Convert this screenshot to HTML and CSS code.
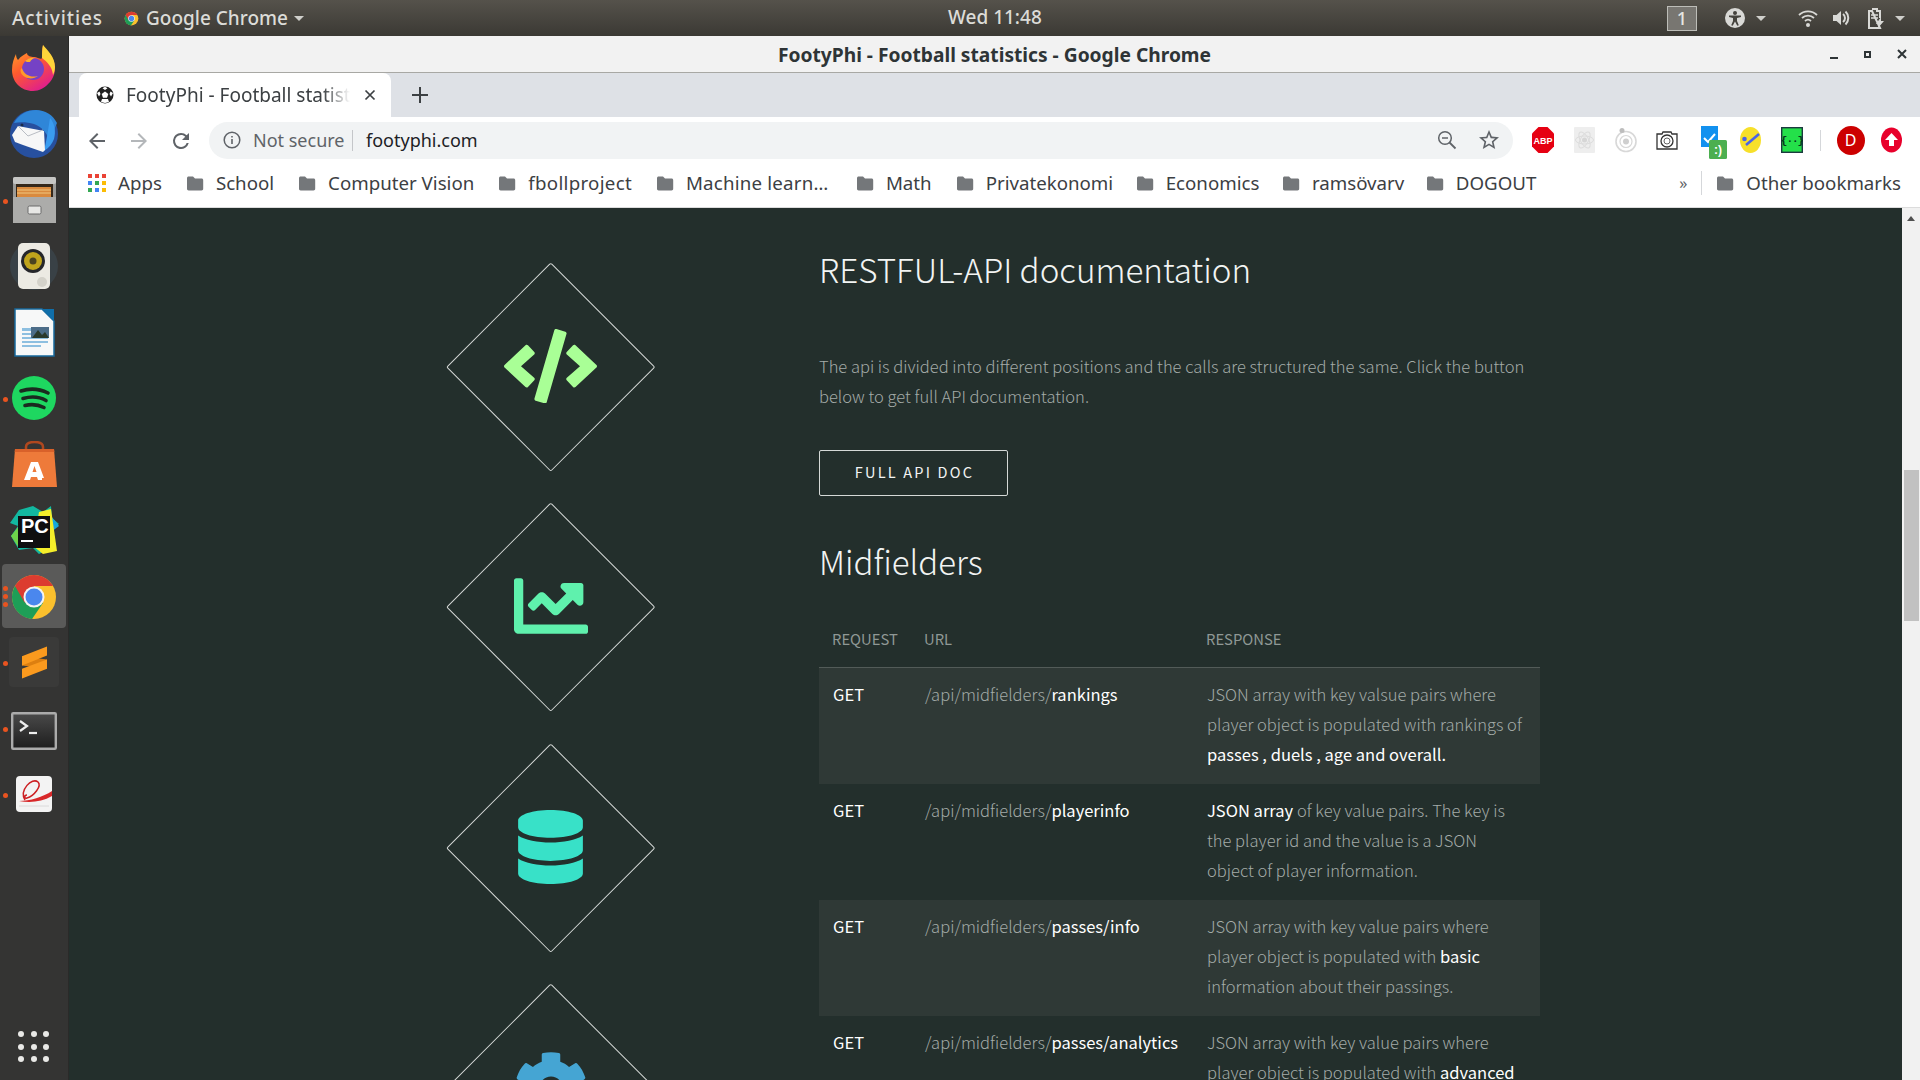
FILE: index.html
```html
<!DOCTYPE html>
<html lang="en">
<head>
<meta charset="utf-8">
<title>FootyPhi - Football statistics</title>
<link rel="stylesheet" href="styles.css">
</head>
<body>
<svg class="defs" width="0" height="0" aria-hidden="true">
  <symbol id="folder" viewBox="0 0 18 18"><path d="M1 4.2C1 3.2 1.7 2.5 2.7 2.5H7l2 2h6.5c1 0 1.7.7 1.7 1.7v8.600c0 1-.7 1.700-1.700 1.700H2.700c-1 0-1.700-.7-1.700-1.700z" fill="#74777a"/></symbol>
  <symbol id="chrome" viewBox="0 0 48 48">
    <circle cx="24" cy="24" r="22" fill="#fbc02d"/>
    <path d="M24 24 5 13A22 22 0 0 0 22 46L33 30Z" fill="#1e9e57"/>
    <path d="M24 13H43A22 22 0 0 0 5 13L14.500 29.500 24 24Z" fill="#dc3c30"/>
    <circle cx="24" cy="24" r="10.500" fill="#f4f4f4"/>
    <circle cx="24" cy="24" r="8.500" fill="#4a87ee"/>
  </symbol>
</svg>

<header class="topbar">
  <div class="tb-left">
    <span class="tb-activities">Activities</span>
    <svg class="tb-chrome" width="15" height="15"><use href="#chrome"/></svg>
    <span class="tb-app">Google Chrome</span>
    <span class="caret"></span>
  </div>
  <span class="tb-clock">Wed 11:48</span>
  <span class="tb-right">
    <span class="tb-ws">1</span>
    <svg class="tb-a11y" width="20" height="20" viewBox="0 0 20 20"><circle cx="10" cy="10" r="10" fill="#d9d9d6"/><circle cx="10" cy="5" r="2" fill="#45433d"/><path d="M4 7.500h12v1.600l-4 .8v3l1.800 4.400-1.500.5L10 13.500 7.700 17.800l-1.500-.5L8 13V9.900l-4-.8z" fill="#45433d"/></svg>
    <span class="caret caret-a11y"></span>
    <svg class="tb-wifi" width="20" height="20" viewBox="0 0 20 20"><path d="M1 7a13 13 0 0 1 18 0M4 10a9 9 0 0 1 12 0M7 13a4.500 4.500 0 0 1 6 0" fill="none" stroke="#d9d9d6" stroke-width="1.800"/><circle cx="10" cy="17" r="2" fill="#d9d9d6"/></svg>
    <svg class="tb-vol" width="20" height="20" viewBox="0 0 20 20"><path d="M1 7h3.500L9 3v14l-4.500-4H1z" fill="#d9d9d6"/><path d="M11 6a5 5 0 0 1 0 8M13.500 3.500a9 9 0 0 1 0 13" fill="none" stroke="#d9d9d6" stroke-width="2"/></svg>
    <svg class="tb-bat" width="20" height="22" viewBox="0 0 20 22"><path d="M6 2h5v2h3v7M14 21H3V4h3z" fill="none" stroke="#d9d9d6" stroke-width="2"/><path d="M5 8h7M5 11h7" stroke="#d9d9d6" stroke-width="1.500"/><path d="M15 10l-5 7h3l-1 4 6-7h-3z" fill="#d9d9d6"/></svg>
    <span class="caret caret-bat"></span>
  </span>
</header>

<div class="desktop">
  <nav class="dock">
    <div class="dock-item">
      <svg width="46" height="46" viewBox="0 0 46 46"><defs><linearGradient id="ff" x1="0" y1="0" x2="0.600" y2="1"><stop offset="0" stop-color="#ffb02a"/><stop offset=".5" stop-color="#ff5a2e"/><stop offset="1" stop-color="#e0208a"/></linearGradient></defs><path d="M32 0c1 4 9 9 11 17 2 7 1 14-4 20-5 6-11 9-17 9C10 46 1 37 1 25 1 18 3 13 5 9c0 3 1 5 2 6 3-4 7-6 9-7 0 3 4 4 7 4 4 0 8 4 8 0 0-4 0-8 1-12z" fill="url(#ff)"/><path d="M32 0c5 6 12 12 12 22 0 3-1 6-2 8-1-9-6-13-11-17 0-4 0-8 1-13z" fill="#ffd53a"/><circle cx="22" cy="24" r="11" fill="#7542c5"/><path d="M11 23c2 7 9 10 16 8-5 4-14 3-17-3-1-4 0-4 1-5z" fill="#ff9a2a"/><path d="M14 16c3-3 7-4 11-3-3 0-5 2-6 4-2 0-4 0-5-1z" fill="#ffb02a"/></svg>
    </div>
    <div class="dock-item">
      <svg width="50" height="48" viewBox="0 0 50 48"><circle cx="25" cy="24" r="24" fill="#27509f"/><path d="M5 13C10 4 18 0 27 0c9 0 17 5 21 13-3 6-4 12-7 18-3-8-8-14-16-17-7-2-14-2-20-1z" fill="#2f86d8"/><path d="M41 8c5 6 6 14 4 21-2 5-5 9-10 12 2-8 4-20 6-33z" fill="#3a9cf0"/><circle cx="13" cy="15" r="1.500" fill="#1a2c4a"/><path d="M3 25l6-9 26 5 1 19-2 2-20-7-8-3z" fill="#f7f7f7"/><path d="M9 16l10 10 15-6" fill="none" stroke="#b9bdc4"/></svg>
    </div>
    <div class="dock-item">
      <span class="pips"><i></i></span>
      <svg width="43" height="46" viewBox="0 0 43 46"><rect x="0" y="0" width="43" height="46" rx="2" fill="#9a9a98"/><rect x="0" y="0" width="43" height="7" rx="2" fill="#c6c6c4"/><rect x="3" y="7" width="37" height="14" fill="#34271a"/><rect x="4" y="10" width="34" height="10" fill="#d98a3e"/><path d="M4 13h34M4 16h34" stroke="#f1c77e"/><path d="M0 20h43v26H0z" fill="#acacaa"/><rect x="15" y="29" width="13" height="8" rx="1.500" fill="#e7e7e5" stroke="#6a6a6a"/></svg>
    </div>
    <div class="dock-item">
      <svg width="50" height="48" viewBox="0 0 50 48"><circle cx="25" cy="24" r="24" fill="#394146"/><rect x="9" y="1" width="32" height="46" rx="5" fill="#eceae3"/><circle cx="24" cy="19" r="12" fill="#25262a"/><circle cx="24" cy="19" r="9" fill="#c0a41c"/><circle cx="24" cy="19" r="3.500" fill="#4a4320"/><circle cx="33" cy="40" r="5" fill="#d4d2ca"/></svg>
    </div>
    <div class="dock-item">
      <svg width="41" height="49" viewBox="0 0 41 49"><path d="M1 1h27l12 12v35H1z" fill="#f7f8f8" stroke="#17689c" stroke-width="1.500"/><path d="M28 1h12v12z" fill="#106ea9"/><path d="M8 20h19v3H8zM8 25h26v2H8zM8 29h26v2H8zM8 33h26v2H8zM8 37h19v2H8z" fill="#8dbfe0"/><rect x="17" y="19" width="18" height="11" fill="#4c6d88"/><path d="M18 30l6-8 4 5 3-3 4 6z" fill="#2a3a2c"/></svg>
    </div>
    <div class="dock-item">
      <span class="pips"><i></i></span>
      <svg width="44" height="44" viewBox="0 0 44 44"><circle cx="22" cy="22" r="22" fill="#1ed760"/><path d="M9 15c9-3 19-2 27 2M11 22.500c7-2 16-2 23 2M13 29.500c6-1.500 13-1 19 2" fill="none" stroke="#1a2a1f" stroke-width="3.600" stroke-linecap="round"/></svg>
    </div>
    <div class="dock-item">
      <svg width="45" height="46" viewBox="0 0 45 46"><path d="M14 10V6c0-3 3-5 8.500-5S31 3 31 6v4" fill="none" stroke="#b0481f" stroke-width="2.500"/><path d="M3 8h39l3 38H0z" fill="#ee7a3a"/><path d="M3 8h39l.3 3H2.700z" fill="#d9612a"/><path d="M19 21h7l6 16h-2v2h-4l-1-3h-6l-1 3h-6zM22.500 25l-2 6h4z" fill="#fff"/></svg>
    </div>
    <div class="dock-item item-pc">
      <svg width="50" height="50" viewBox="0 0 50 50"><path d="M10 4 24 0l10 6 8-6 1 12 7 6-9 6 3 17-14 7-6-6-14 2L2 30l7-10-8-3z" fill="#12b8a0"/><path d="M39 6l11 14-8 6z" fill="#17a6dd"/><path d="M30 6l12-3 6 42-14 3-10-8z" fill="#f5ee2a"/><path d="M2 30l8-10v22z" fill="#6fd24a"/><rect x="9" y="10" width="32" height="32" fill="#0f0f10"/><text x="12" y="27" class="pc-text">PC</text><rect x="12" y="34" width="12" height="2" fill="#fff"/></svg>
    </div>
    <div class="dock-item active">
      <span class="pips"><i></i><i></i><i></i></span>
      <svg width="48" height="48"><use href="#chrome"/></svg>
    </div>
    <div class="dock-item">
      <span class="pips"><i></i></span>
      <span class="sublime-tile">
        <svg width="25" height="33" viewBox="0 0 76 98"><path d="M0 30 76 40V68L0 58z" fill="#dd7f10"/><path d="M0 30 76 0V28L0 58z" fill="#fb9a1e"/><path d="M0 68 76 40V68L0 98z" fill="#fb9a1e"/></svg>
      </span>
    </div>
    <div class="dock-item item-term">
      <span class="pips"><i></i></span>
      <svg width="46" height="38" viewBox="0 0 46 38"><defs><linearGradient id="tm" x1="0" y1="0" x2="0" y2="1"><stop offset="0" stop-color="#4a4a4a"/><stop offset="1" stop-color="#1d1d1d"/></linearGradient></defs><rect x="1.200" y="1.200" width="43.600" height="35.600" rx="1" fill="url(#tm)" stroke="#ababab" stroke-width="2.400"/><path d="M9 9l7 5-7 5" fill="none" stroke="#eee" stroke-width="2.200"/><path d="M18 21h8" stroke="#eee" stroke-width="2.200"/></svg>
    </div>
    <div class="dock-item">
      <span class="pips"><i></i></span>
      <svg width="36" height="36" viewBox="0 0 36 36"><rect width="36" height="36" rx="4" fill="#f3f3f3"/><path d="M3 25c11 0 24-4 33-10v5C26 26 14 27 3 25z" fill="#d8282a"/><path d="M9 24C3 14 16 1 22 6c4 4-4 14-11 16-3 1-3-3 0-3" fill="none" stroke="#cc1f22" stroke-width="1.500"/><path d="M3 30h30" stroke="#dadada"/></svg>
    </div>
    <div class="dock-grid"><i></i><i></i><i></i><i></i><i></i><i></i><i></i><i></i><i></i></div>
  </nav>

  <div class="window">
    <div class="titlebar">
      <span class="title-text">FootyPhi - Football statistics - Google Chrome</span>
      <span class="win-btns">
        <span class="win-min"></span>
        <span class="win-max"></span>
        <svg width="10" height="10" viewBox="0 0 10 10"><path d="M1 1l8 8M9 1l-8 8" stroke="#2e3436" stroke-width="2"/></svg>
      </span>
    </div>

    <div class="tabstrip">
      <div class="tab">
        <svg class="tab-fav" width="18" height="18" viewBox="0 0 18 18"><circle cx="9" cy="9" r="8.500" fill="#222"/><path d="M9 5.500l3.300 2.400-1.300 3.900H7L5.700 7.900z" fill="#fff"/><path d="M9 .8l2.500 1.500L9 4 6.500 2.300zM1 7l2.500-1.500L4.500 8 3 10.500zM17 7l-2.500-1.500L13.500 8l1.500 2.500zM5 16l1-3h6l1 3-4 1z" fill="#fff"/></svg>
        <span class="tab-title">FootyPhi - Football statistics</span>
        <svg class="tab-close" width="12" height="12" viewBox="0 0 12 12"><path d="M1.500 1.500l9 9M10.500 1.500l-9 9" stroke="#3c4043" stroke-width="1.700"/></svg>
      </div>
      <svg class="tab-new" width="16" height="16" viewBox="0 0 16 16"><path d="M8 0v16M0 8h16" stroke="#3c4043" stroke-width="2"/></svg>
    </div>

    <div class="toolbar">
      <svg class="nav-back" width="24" height="24" viewBox="0 0 24 24"><path d="M20 11H7.800l5.600-5.600L12 4l-8 8 8 8 1.400-1.400L7.800 13H20z" fill="#5f6368"/></svg>
      <svg class="nav-fwd" width="24" height="24" viewBox="0 0 24 24"><path d="M4 11h12.200l-5.600-5.600L12 4l8 8-8 8-1.400-1.400 5.600-5.600H4z" fill="#b4b7ba"/></svg>
      <svg class="nav-reload" width="24" height="24" viewBox="0 0 24 24"><path d="M17.650 6.350A7.960 7.960 0 0 0 12 4a8 8 0 1 0 7.730 10h-2.080A6 6 0 1 1 12 6c1.660 0 3.140.69 4.220 1.780L13 11h7V4z" fill="#5f6368"/></svg>
      <div class="omnibox">
        <svg class="omni-info" width="18" height="18" viewBox="0 0 18 18"><circle cx="9" cy="9" r="7.800" fill="none" stroke="#5f6368" stroke-width="1.500"/><path d="M8.200 8h1.600v5H8.200zM8.200 5h1.600v1.600H8.200z" fill="#5f6368"/></svg>
        <span class="omni-secure">Not secure</span>
        <span class="omni-sep"></span>
        <span class="omni-url">footyphi.com</span>
        <svg class="omni-zoom" width="20" height="20" viewBox="0 0 20 20"><circle cx="8" cy="8" r="6.300" fill="none" stroke="#5f6368" stroke-width="1.500"/><path d="M12.500 12.500l6 6" stroke="#5f6368" stroke-width="1.800"/><path d="M5 8h6" stroke="#5f6368" stroke-width="1.500"/></svg>
        <svg class="omni-star" width="24" height="24" viewBox="0 0 24 24"><path d="M22 9.240l-7.190-.62L12 2 9.190 8.630 2 9.240l5.460 4.730L5.820 21 12 17.270 18.180 21l-1.630-7.030L22 9.240zM12 15.400l-3.760 2.270 1-4.280-3.320-2.880 4.380-.38L12 6.100l1.710 4.040 4.380.38-3.320 2.880 1 4.280L12 15.400z" fill="#5f6368"/></svg>
      </div>
      <div class="exts">
        <span class="ext"><svg width="22" height="26" viewBox="0 0 22 26"><path d="M6.500 0h9L22 6.500v13L15.500 26h-9L0 19.500v-13z" fill="#e60012"/><text x="11" y="17" class="abp-text">ABP</text></svg></span>
        <span class="ext"><svg width="21" height="26" viewBox="0 0 21 26"><rect width="21" height="26" rx="1" fill="#eeeeee"/><g fill="none" stroke="#dcdcdc"><ellipse cx="10.500" cy="13" rx="9" ry="4"/><ellipse cx="10.500" cy="13" rx="9" ry="4" transform="rotate(60 10.500 13)"/><ellipse cx="10.500" cy="13" rx="9" ry="4" transform="rotate(120 10.500 13)"/></g><circle cx="10.500" cy="13" r="2.500" fill="#d6d6d6"/></svg></span>
        <span class="ext"><svg width="22" height="26" viewBox="0 0 22 26"><circle cx="11" cy="14.500" r="10" fill="none" stroke="#d8d8d8" stroke-width="1.600"/><circle cx="11" cy="14.500" r="6" fill="none" stroke="#d8d8d8" stroke-width="1.200"/><circle cx="11" cy="14.500" r="3" fill="#cfcfcf"/><circle cx="7" cy="3.500" r="2.500" fill="#bdbdbd"/></svg></span>
        <span class="ext"><svg width="22" height="20" viewBox="0 0 22 20"><path d="M1 4h5l1-2h8l1 2h5v15H1z" fill="#fff" stroke="#333" stroke-width="1.300"/><circle cx="11" cy="11" r="6" fill="none" stroke="#333" stroke-width="1.300"/><circle cx="11" cy="11" r="3" fill="none" stroke="#666"/></svg></span>
        <span class="ext ext-check"><svg width="28" height="34" viewBox="0 0 28 34"><rect x="1" y="1" width="17" height="21" fill="#1291ef"/><path d="M4 13l4 4 7-8" fill="none" stroke="#fff" stroke-width="2"/><rect x="9" y="15" width="18" height="19" rx="1.500" fill="#4caf50"/><text x="18" y="29" class="smile-text">:)</text></svg></span>
        <span class="ext"><svg width="21" height="26" viewBox="0 0 21 26"><ellipse cx="10.500" cy="13" rx="10.500" ry="13" fill="#f7e02a"/><path d="M6 18 19 7" stroke="#4a63e8" stroke-width="2.600"/><circle cx="4.500" cy="12" r="2.300" fill="#4a63e8"/></svg></span>
        <span class="ext"><svg width="22" height="26" viewBox="0 0 22 26"><rect x=".7" y=".7" width="20.600" height="24.600" fill="#24e04a" stroke="#1c3a3f" stroke-width="1.400"/><text x="11" y="17" class="brace-text">{··}</text></svg></span>
        <span class="ext-sep"></span>
        <span class="avatar">D</span>
        <svg class="ext-up" width="21" height="26" viewBox="0 0 21 26"><ellipse cx="10.500" cy="13" rx="10.500" ry="12.500" fill="#e8002b"/><path d="M10.500 6l6.500 7h-4v6H8v-6H4z" fill="#fff"/></svg>
      </div>
    </div>

    <div class="bookmarks">
      <span class="bm bm-apps">
        <span class="apps-grid"><i class="r"></i><i class="r"></i><i class="r"></i><i class="b"></i><i class="g"></i><i class="y"></i><i class="g"></i><i class="b"></i><i class="y"></i></span>
        Apps
      </span>
      <span class="bm"><svg class="fld"><use href="#folder"/></svg>School</span>
      <span class="bm"><svg class="fld"><use href="#folder"/></svg>Computer Vision</span>
      <span class="bm bm-wide"><svg class="fld"><use href="#folder"/></svg>fbollproject</span>
      <span class="bm bm-ml"><svg class="fld"><use href="#folder"/></svg>Machine learn…</span>
      <span class="bm bm-math"><svg class="fld"><use href="#folder"/></svg>Math</span>
      <span class="bm"><svg class="fld"><use href="#folder"/></svg>Privatekonomi</span>
      <span class="bm bm-tight"><svg class="fld"><use href="#folder"/></svg>Economics</span>
      <span class="bm bm-tight"><svg class="fld"><use href="#folder"/></svg>ramsövarv</span>
      <span class="bm bm-tighter"><svg class="fld"><use href="#folder"/></svg>DOGOUT</span>
      <span class="bm-more">»</span>
      <span class="bm-sep"></span>
      <span class="bm bm-other"><svg class="fld"><use href="#folder"/></svg>Other bookmarks</span>
    </div>

    <div class="viewport">
      <main class="page">
        <div class="diamonds">
          <div class="diamond">
            <svg class="ic-code" viewBox="0 0 640 512"><path d="M278.900 511.500l-61-17.700c-6.400-1.800-10-8.500-8.200-14.900L346.200 8.700c1.800-6.400 8.500-10 14.900-8.200l61 17.700c6.400 1.800 10 8.500 8.200 14.900L293.800 503.300c-1.900 6.400-8.500 10.100-14.900 8.200zm-114-112.200l43.500-46.400c4.600-4.900 4.300-12.700-.8-17.200L117 256l90.600-79.700c5.100-4.500 5.500-12.300.8-17.200l-43.500-46.400c-4.500-4.800-12.100-5.100-17-.5L3.800 247.200c-5.100 4.700-5.100 12.800 0 17.500l144.100 135.100c4.900 4.600 12.500 4.400 17-.5zm327.200.6l144.100-135.100c5.100-4.700 5.100-12.800 0-17.500L492.100 112.100c-4.800-4.500-12.400-4.300-17 .5L431.600 159c-4.600 4.900-4.300 12.700.8 17.200L523 256l-90.600 79.700c-5.100 4.500-5.500 12.300-.8 17.200l43.500 46.400c4.500 4.900 12.100 5.100 17 .6z"/></svg>
          </div>
          <div class="diamond">
            <svg class="ic-chart" viewBox="0 0 512 512"><path d="M496 384H64V80c0-8.840-7.160-16-16-16H16C7.160 64 0 71.160 0 80v336c0 17.670 14.330 32 32 32h464c8.840 0 16-7.160 16-16v-32c0-8.840-7.160-16-16-16zM464 96H345.940c-21.380 0-32.090 25.850-16.970 40.970l32.400 32.400L288 242.750l-73.370-73.370c-12.500-12.500-32.760-12.500-45.250 0l-68.690 68.690c-6.250 6.250-6.250 16.380 0 22.630l22.620 22.620c6.250 6.250 16.380 6.250 22.630 0L192 237.250l73.370 73.370c12.500 12.500 32.760 12.500 45.250 0l96-96 32.400 32.400c15.120 15.120 40.970 4.410 40.970-16.970V112c0-8.840-7.160-16-16-16z"/></svg>
          </div>
          <div class="diamond">
            <svg class="ic-db" viewBox="0 0 448 512"><path d="M448 73.143v45.714C448 159.143 347.667 192 224 192S0 159.143 0 118.857V73.143C0 32.857 100.333 0 224 0s224 32.857 224 73.143zM448 176v102.857C448 319.143 347.667 352 224 352S0 319.143 0 278.857V176c48.125 33.143 136.208 48.572 224 48.572S399.874 209.143 448 176zm0 160v102.857C448 479.143 347.667 512 224 512S0 479.143 0 438.857V336c48.125 33.143 136.208 48.572 224 48.572S399.874 369.143 448 336z"/></svg>
          </div>
          <div class="diamond">
            <svg class="ic-cog" viewBox="0 0 512 512"><path d="M487.400 315.700l-42.600-24.600c4.300-23.200 4.300-47 0-70.200l42.600-24.600c4.900-2.800 7.100-8.600 5.500-14-11.100-35.600-30-67.800-54.700-94.600-3.800-4.100-10-5.100-14.800-2.300L380.800 110c-17.900-15.400-38.500-27.300-60.800-35.100V25.800c0-5.600-3.900-10.500-9.400-11.700-36.700-8.200-74.300-7.800-109.200 0-5.500 1.200-9.400 6.100-9.400 11.700V75c-22.200 7.900-42.800 19.800-60.800 35.100L88.700 85.500c-4.900-2.800-11-1.900-14.800 2.300-24.700 26.700-43.600 58.900-54.700 94.600-1.700 5.400.6 11.200 5.500 14L67.300 221c-4.300 23.200-4.300 47 0 70.200l-42.600 24.600c-4.900 2.800-7.100 8.600-5.500 14 11.100 35.600 30 67.800 54.700 94.600 3.800 4.100 10 5.100 14.800 2.300l42.600-24.600c17.900 15.400 38.500 27.300 60.800 35.100v49.200c0 5.600 3.900 10.500 9.400 11.700 36.700 8.200 74.300 7.800 109.200 0 5.500-1.200 9.400-6.100 9.400-11.700v-49.200c22.200-7.900 42.800-19.800 60.800-35.100l42.600 24.600c4.900 2.800 11 1.900 14.800-2.300 24.700-26.700 43.600-58.900 54.700-94.600 1.500-5.500-.7-11.300-5.600-14.100zM256 336c-44.100 0-80-35.900-80-80s35.900-80 80-80 80 35.900 80 80-35.900 80-80 80z"/></svg>
          </div>
        </div>

        <section class="docs">
          <h1 class="doc-title">RESTFUL-API documentation</h1>
          <p class="doc-lead">The api is divided into different positions and the calls are structured the same. Click the button<br>below to get full API documentation.</p>
          <a class="doc-btn">FULL API DOC</a>
          <h2 class="doc-sub">Midfielders</h2>
          <table class="api">
            <thead>
              <tr><th>REQUEST</th><th>URL</th><th>RESPONSE</th></tr>
            </thead>
            <tbody>
              <tr>
                <td class="verb">GET</td>
                <td>/api/midfielders/<b>rankings</b></td>
                <td>JSON array with key valsue pairs where<br>player object is populated with rankings of<br><b>passes , duels , age and overall.</b></td>
              </tr>
              <tr>
                <td class="verb">GET</td>
                <td>/api/midfielders/<b>playerinfo</b></td>
                <td><b>JSON array</b> of key value pairs. The key is<br>the player id and the value is a JSON<br>object of player information.</td>
              </tr>
              <tr>
                <td class="verb">GET</td>
                <td>/api/midfielders/<b>passes/info</b></td>
                <td>JSON array with key value pairs where<br>player object is populated with <b>basic</b><br>information about their passings.</td>
              </tr>
              <tr>
                <td class="verb">GET</td>
                <td>/api/midfielders/<b>passes/analytics</b></td>
                <td>JSON array with key value pairs where<br>player object is populated with <b>advanced</b><br>information about their passings.</td>
              </tr>
            </tbody>
          </table>
        </section>
      </main>
      <aside class="scrollbar">
        <span class="sb-arrow"></span>
        <span class="sb-thumb"></span>
      </aside>
    </div>
  </div>
</div>
</body>
</html>
```

FILE: styles.css
```css
* { box-sizing: border-box; }
html, body { margin: 0; height: 100%; overflow: hidden; }
body { width: 1920px; height: 1080px; font-family: "Noto Sans", sans-serif; background: #343433; }
svg { display: block; flex: none; }
.defs { position: absolute; }

/* GNOME top bar */
.topbar { height: 36px; display: flex; align-items: center; padding-left: 12px;
  background: linear-gradient(#55524b, #3b3934); color: #dcdcd8; font-size: 19px; font-weight: 500; }
.tb-left { width: 936px; flex: none; display: flex; align-items: center; }
.tb-activities { width: 104px; letter-spacing: .9px; }
.tb-chrome { margin: 0 7px 0 8px; }
.tb-app { width: 143px; white-space: nowrap; }
.caret { width: 0; height: 0; border: 5px solid transparent; border-top: 5px solid #cfcfcb; border-bottom: 0; margin-left: 5px; }
.tb-clock { line-height: 24px; margin-top: -2px; white-space: nowrap; }
.tb-right { margin-left: auto; display: flex; align-items: center; padding-right: 15px; }
.tb-ws { width: 30px; height: 25px; border: 1px solid #bdbdb8; background: #787671; display: flex; align-items: center; justify-content: center; color: #e6e6e2; font-size: 18px; margin-right: 28px; }
.caret-a11y { margin-left: 11px; margin-right: 32px; }
.tb-vol { margin-left: 14px; }
.tb-bat { margin-left: 14px; }
.caret-bat { margin-left: 9px; }

.desktop { display: flex; height: 1044px; }

/* Dock */
.dock { width: 69px; flex: none; display: flex; flex-direction: column; background: #343433; border-right: 1px solid #2a2a29; }
.dock-item { height: 66px; flex: none; display: flex; align-items: center; justify-content: center; position: relative; padding-bottom: 2px; }
.dock-item.active { background: #5a5a59; border-radius: 4px; margin: 0 2px 2px 2px; height: 64px; padding-bottom: 0; padding-top: 1px; }
.dock-item.item-pc { padding-bottom: 0; }
.dock-item.item-term { padding-bottom: 0; padding-top: 3px; }
.pips { position: absolute; left: 2.500px; top: 0; bottom: 0; display: flex; flex-direction: column; justify-content: center; gap: 3px; }
.dock-item.active .pips { left: .500px; }
.pips i { display: block; width: 5px; height: 5px; border-radius: 50%; background: #e95420; }
.sublime-tile { width: 50px; height: 50px; border-radius: 4px; background: #3a3a39; display: flex; align-items: center; justify-content: center; }
.dock-grid { margin: auto 0 18px 18px; display: grid; grid-template-columns: repeat(3, 6px); gap: 6.500px; }
.dock-grid i { width: 6px; height: 6px; border-radius: 50%; background: #e9e9e7; }
.pc-text { font: 700 20px "Liberation Sans", sans-serif; fill: #fff; }
.abp-text { font: 700 9px "Liberation Sans", sans-serif; fill: #fff; text-anchor: middle; }
.smile-text { font: 700 12px "Liberation Sans", sans-serif; fill: #fff; text-anchor: middle; }
.brace-text { font: 700 11px "Liberation Mono", monospace; fill: #06361c; text-anchor: middle; letter-spacing: -1px; }

/* Window frame */
.window { flex: 1; min-width: 0; display: flex; flex-direction: column; background: #fff; }
.titlebar { height: 37px; flex: none; background: #f2f2f2; border-bottom: 1px solid #a8a8a4; display: grid; grid-template-columns: 1fr auto 1fr; align-items: center; }
.title-text { grid-column: 2; line-height: 24px; margin-top: 2px; font-size: 19.200px; font-weight: 700; color: #2e3436; white-space: nowrap; }
.win-btns { grid-column: 3; justify-self: end; display: flex; align-items: center; padding-right: 13px; }
.win-min { width: 8px; height: 2px; background: #2e3436; margin: 7px 26px 0 0; }
.win-max { width: 7px; height: 7px; border: 2px solid #2e3436; margin-right: 26px; }

/* Tabs */
.tabstrip { height: 44px; flex: none; background: #dee1e6; display: flex; align-items: center; padding-left: 10px; }
.tab { width: 312px; height: 44px; background: #fff; border-radius: 8px 8px 0 0; display: flex; align-items: center; }
.tab-fav { margin-left: 17px; }
.tab-title { width: 224px; margin-left: 12px; overflow: hidden; white-space: nowrap; font-size: 19px; color: #3c4043;
  -webkit-mask-image: linear-gradient(90deg, #000 88%, transparent); mask-image: linear-gradient(90deg, #000 88%, transparent); }
.tab-close { margin-left: 14px; }
.tab-new { margin-left: 21px; }

/* Toolbar */
.toolbar { height: 48px; flex: none; background: #fff; display: flex; align-items: center; padding-left: 16px; }
.nav-fwd { margin-left: 18px; }
.nav-reload { margin-left: 18px; }
.omnibox { width: 1304px; height: 37px; margin-left: 16px; border-radius: 19px; background: #f1f3f4; display: flex; align-items: center; padding-left: 14px; font-size: 18px; margin-top: -2px; }
.omni-secure { margin-left: 12px; width: 90px; white-space: nowrap; color: #5f6368; }
.omni-sep { width: 1px; height: 21px; background: #c4c6c9; margin: 0 13px 0 9px; }
.omni-url { color: #202124; white-space: nowrap; }
.omni-zoom { margin-left: auto; }
.omni-star { margin: 0 12px 0 20px; }
.exts { display: flex; align-items: center; margin-left: 9px; margin-top: -2px; }
.ext { width: 41.500px; display: flex; justify-content: center; position: relative; }
.ext-check svg { position: relative; left: 5px; top: 4px; margin-top: -4px; }
.ext-sep { width: 1px; height: 21px; background: #d5d7da; margin: 0 16px 0 7px; }
.avatar { width: 28px; height: 29px; border-radius: 50%; background: #cc0000; color: #fff; font-size: 16px; display: flex; align-items: center; justify-content: center; }
.ext-up { margin-left: 16px; }

/* Bookmarks */
.bookmarks { height: 43px; flex: none; background: #fff; border-bottom: 1px solid #dcdcdc; display: flex; align-items: center; padding: 0 19px 7px 19px; gap: 24px; font-size: 18.700px; color: #3c4043; }
.bm { display: flex; align-items: center; gap: 12px; white-space: nowrap; }
.bm-wide { letter-spacing: .3px; }
.bm-ml { letter-spacing: .2px; }
.bm-math { margin-left: 3.500px; }
.bm-tight { margin-left: -1.500px; }
.bm-tighter { margin-left: -2.500px; }
.fld { width: 18px; height: 18px; }
.apps-grid { width: 18px; height: 18px; display: grid; grid-template-columns: repeat(3, 4px); gap: 3px; }
.apps-grid i { width: 4px; height: 4px; }
.apps-grid .r { background: #ea4335; }
.apps-grid .g { background: #34a853; }
.apps-grid .b { background: #4285f4; }
.apps-grid .y { background: #fbbc05; }
.bm-more { margin-left: auto; font-size: 16px; color: #5f6368; }
.bm-sep { width: 1px; height: 24px; background: #d5d7da; margin-left: -10px; margin-right: -10px; }

/* Page */
.viewport { flex: 1; min-height: 0; display: flex; }
.page { flex: 1; min-width: 0; background: #232f2c; display: flex; overflow: hidden; padding-left: 408px; }
.diamonds { width: 147.500px; flex: none; padding-top: 84.500px; display: flex; flex-direction: column; gap: 93px; }
.diamond { width: 147.500px; height: 147.500px; flex: none; position: relative; display: flex; align-items: center; justify-content: center; }
.diamond::before { content: ""; position: absolute; inset: 0; border: 1px solid #d5d9d7; border-radius: 2px; transform: rotate(45deg); }
.ic-code { width: 93px; height: 74.400px; fill: #a9ff96; }
.ic-chart { width: 74px; height: 74px; fill: #5ff1ad; margin-top: -1px; }
.ic-db { width: 65px; height: 74px; fill: #38e1c8; margin-top: -1px; }
.ic-cog { width: 74px; height: 74px; fill: #45a5d3; }

.docs { width: 721px; flex: none; margin-left: 194.500px; padding-top: 38px; font-family: "Noto Sans CJK JP", "Source Sans Pro", sans-serif; font-weight: 300; color: #a3aba8; }
.doc-title { margin: 0; font-size: 33.200px; line-height: 46px; font-weight: 300; color: #f2f4f3; white-space: nowrap; }
.doc-lead { margin: 59px 0 0; font-size: 16.550px; line-height: 30px; white-space: nowrap; }
.doc-btn { display: flex; align-items: center; justify-content: center; width: 189px; height: 46px; margin-top: 39px; border: 1px solid #d5d9d7; border-radius: 2px; color: #f2f4f3; font-size: 14.500px; font-weight: 400; letter-spacing: 2.200px; padding: 0 0 4px 2px; }
.doc-sub { margin: 42px 0 0; font-size: 33px; line-height: 46px; font-weight: 300; color: #f2f4f3; }

.api { width: 721px; margin-top: 40px; border-collapse: collapse; table-layout: fixed; font-size: 16.550px; line-height: 30px; }
.api th { padding: 0 0 13px 13px; text-align: left; font-size: 14.800px; font-weight: 400; color: #8f9895; border-bottom: 1px solid #525b58; }
.api th:first-child { width: 92px; }
.api th:nth-child(2) { width: 282px; }
.api td { padding: 11px 0 15px 14px; vertical-align: top; white-space: nowrap; }
.api tbody tr:nth-child(odd) { background: #2f3936; }
.api b { font-weight: 400; color: #fff; }
.api .verb { font-weight: 400; color: #fff; }

/* Scrollbar */
.scrollbar { width: 18px; flex: none; background: #f1f1f1; display: flex; flex-direction: column; align-items: center; }
.sb-arrow { width: 0; height: 0; margin-top: 8px; border: 4.500px solid transparent; border-bottom: 5px solid #505050; border-top: 0; }
.sb-thumb { width: 15px; height: 151px; margin: 249px 0 0 1px; background: #c1c1c1; }
```
